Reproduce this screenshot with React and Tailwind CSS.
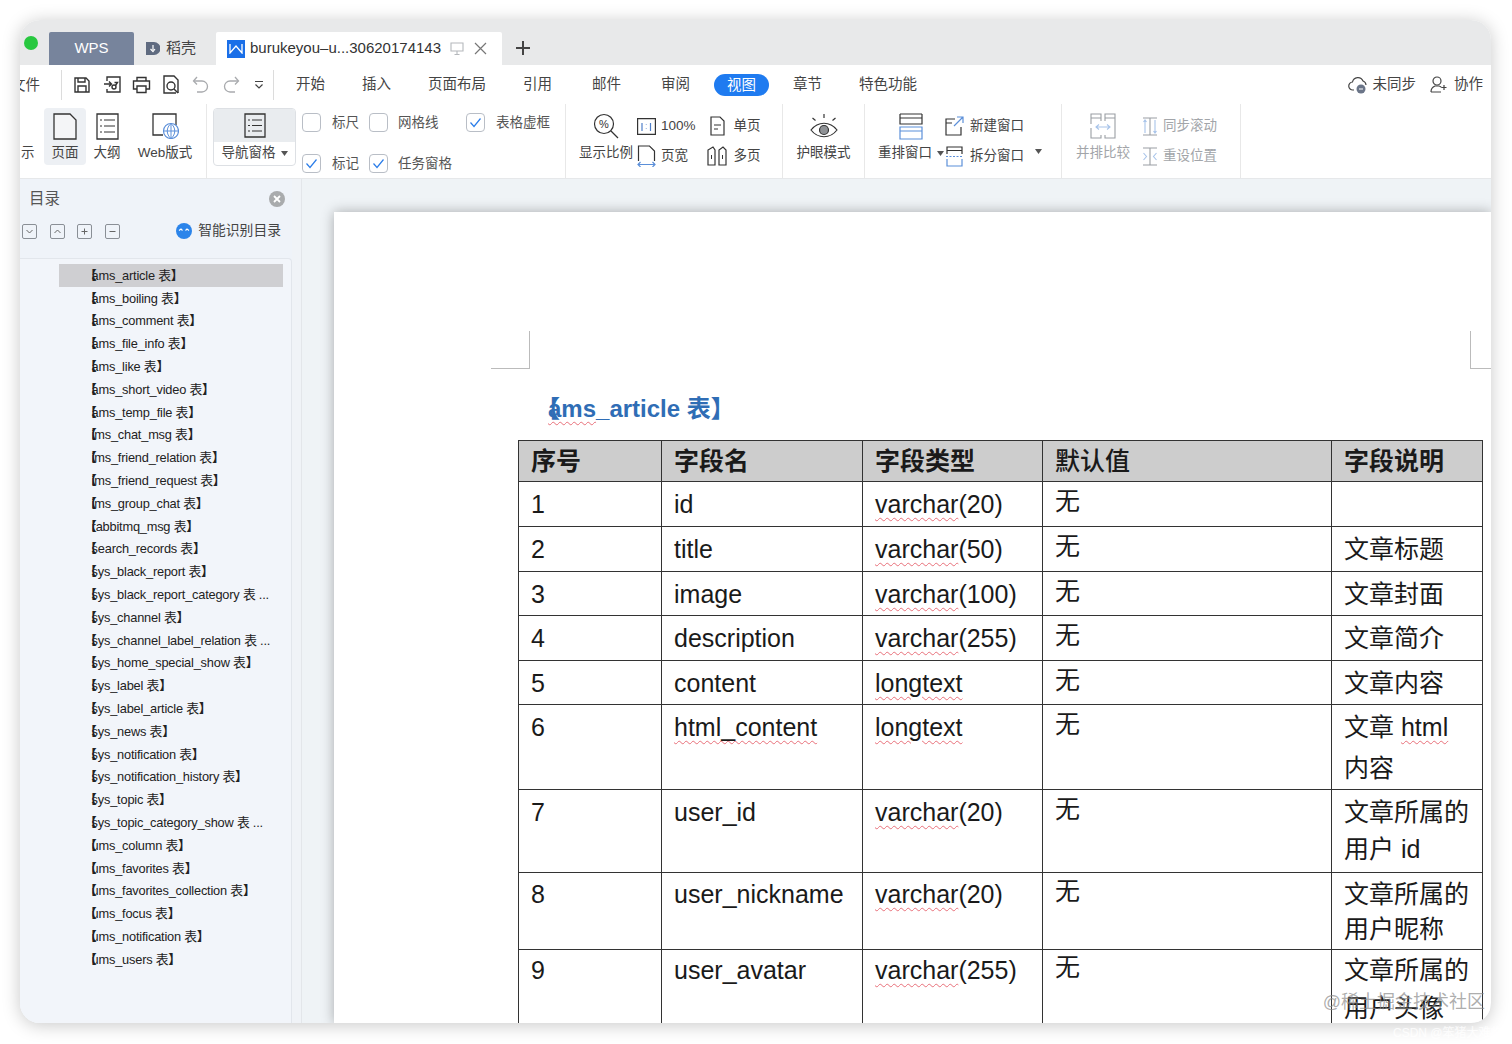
const FONT = "font-['Liberation_Sans','Noto_Sans_CJK_SC',sans-serif]";

const menus = [
  { label: "开始" },
  { label: "插入" },
  { label: "页面布局" },
  { label: "引用" },
  { label: "邮件", extra: "ml-[3px]" },
  { label: "审阅", extra: "ml-[3px]" },
  { label: "视图", active: true },
  { label: "章节" },
  { label: "特色功能" },
];

const outline = [
  "ams_article", "ams_boiling", "ams_comment", "ams_file_info", "ams_like", "ams_short_video",
  "ams_temp_file", "ims_chat_msg", "ims_friend_relation", "ims_friend_request", "ims_group_chat",
  "rabbitmq_msg", "search_records", "sys_black_report", "sys_black_report_category 表 ...",
  "sys_channel", "sys_channel_label_relation 表 ...", "sys_home_special_show", "sys_label",
  "sys_label_article", "sys_news", "sys_notification", "sys_notification_history", "sys_topic",
  "sys_topic_category_show 表 ...", "ums_column", "ums_favorites", "ums_favorites_collection",
  "ums_focus", "ums_notification", "ums_users",
];

const rows = [
  { h: "h-[45px]", lead: "leading-[41px] pt-[2px]", no: "1", name: "id", type: "(20)", note: [""] },
  { h: "h-[45px]", lead: "leading-[41px] pt-[2px]", no: "2", name: "title", type: "(50)", note: ["文章标题"] },
  { h: "h-[44px]", lead: "leading-[41px] pt-[2px]", no: "3", name: "image", type: "(100)", note: ["文章封面"] },
  { h: "h-[45px]", lead: "leading-[41px] pt-[2px]", no: "4", name: "description", type: "(255)", note: ["文章简介"] },
  { h: "h-[44px]", lead: "leading-[41px] pt-[2px]", no: "5", name: "content", long: true, note: ["文章内容"] },
  { h: "h-[84px]", lead: "leading-[41px] pt-[2px]", no: "6", name: "html_content", wavyName: true, long: true, note: ["文章 html", "内容"], wavyNote: true },
  { h: "h-[83px]", lead: "leading-[37px] pt-[4px]", no: "7", name: "user_id", type: "(20)", note: ["文章所属的", "用户 id"] },
  { h: "h-[77px]", lead: "leading-[35px] pt-[4px]", no: "8", name: "user_nickname", type: "(20)", note: ["文章所属的", "用户昵称"] },
  { h: "h-[84px]", lead: "leading-[38px] pt-[1px]", no: "9", name: "user_avatar", type: "(255)", note: ["文章所属的", "用户头像"] },
];

function Wavy({ children }) {
  return (
    <span className="underline decoration-wavy decoration-[#e8707a] decoration-1 underline-offset-[4px]">
      {children}
    </span>
  );
}

function Check({ on }) {
  return (
    <span className="flex h-[19px] w-[19px] items-center justify-center rounded-[4px] border border-[#b9bec6] bg-white">
      {on && (
        <svg width="13" height="13" viewBox="0 0 13 13" fill="none" stroke="#2b7de9" strokeWidth="1.2">
          <path d="M1.5 6.5 5 10.5 11.5 2.5" />
        </svg>
      )}
    </span>
  );
}

function Caret({ color = "#555" }) {
  return (
    <svg width="7" height="5" viewBox="0 0 7 5">
      <path d="M0 0h7L3.5 5z" fill={color} />
    </svg>
  );
}

function SmallBox({ children }) {
  return (
    <span className="flex h-[15px] w-[15px] items-center justify-center rounded-[2px] border border-[#8a8f96]">
      <svg width="9" height="9" viewBox="0 0 9 9" fill="none" stroke="#666" strokeWidth="1">
        {children}
      </svg>
    </span>
  );
}

function LargeTool({ icon, label, caret, width, extra = "", gray }) {
  return (
    <div className={`flex h-[57px] flex-col items-center ${width} ${extra}`}>
      <div className="flex h-[36px] items-center">{icon}</div>
      <div className={`flex items-center gap-[5px] whitespace-nowrap text-[13.5px] leading-[18px] ${gray ? "text-[#a2a5a9]" : "text-[#444]"}`}>
        {label}
        {caret && <Caret />}
      </div>
    </div>
  );
}

function SmallTool({ icon, label, gray, iconWidth = "w-[23px]" }) {
  return (
    <div className={`flex h-[30px] items-center gap-[5px] whitespace-nowrap text-[13.5px] ${gray ? "text-[#a2a5a9]" : "text-[#444]"}`}>
      <span className={`flex justify-center ${iconWidth}`}>{icon}</span>
      {label}
    </div>
  );
}

function QuickIcons() {
  const s = { fill: "none", stroke: "#333", strokeWidth: 1.4 };
  return (
    <div className="flex items-center">
      <svg className="ml-[11px]" width="18" height="18" viewBox="0 0 18 18" {...s}>
        <path d="M2 2h11l3 3v11H2z" /><path d="M5 2v4h7V2M5 16v-6h8v6" />
      </svg>
      <svg className="ml-[12px]" width="19" height="19" viewBox="0 0 19 19" {...s}>
        <path d="M4 6V2h13v15H4v-3" /><path d="M1 9h7M6 6.5 8.5 9 6 11.5" /><circle cx="11" cy="12" r="2" stroke="#333" /><path d="M12.5 10.5l2-3h-3" />
      </svg>
      <svg className="ml-[10px]" width="19" height="18" viewBox="0 0 19 18" {...s}>
        <path d="M5 5V1.5h9V5M5 13H1.5V5h16v8H14" /><path d="M5 10h9v6.5H5z" />
      </svg>
      <svg className="ml-[11px]" width="18" height="19" viewBox="0 0 18 19" {...s}>
        <path d="M14 18H2V1h10l4 4v13" /><circle cx="9" cy="11" r="4" /><path d="m12 14 4 4" />
      </svg>
      <svg className="ml-[12px]" width="17" height="17" viewBox="0 0 17 17" fill="none" stroke="#a9abae" strokeWidth="1.3">
        <path d="M5 1 1.5 5 5 8.5" /><path d="M2 5h8a5.5 5.5 0 0 1 0 11H5" />
      </svg>
      <svg className="ml-[14px]" width="17" height="17" viewBox="0 0 17 17" fill="none" stroke="#a9abae" strokeWidth="1.3">
        <path d="M12 1l3.500 4L12 8.500" /><path d="M15 5H7a5.500 5.500 0 0 0 0 11h5" />
      </svg>
      <svg className="ml-[14px]" width="10" height="10" viewBox="0 0 10 10" fill="none" stroke="#444" strokeWidth="1.2">
        <path d="M1 1.500h8M1.500 4.500 5 8l3.500-3.500" />
      </svg>
    </div>
  );
}

function Toolbar() {
  const line = { fill: "none", stroke: "#333", strokeWidth: 1.3 };
  const blue = "#5b8fd9";
  return (
    <div className="flex h-[75px] border-b border-[#e6e8ea] bg-white">
      <div className="flex w-[187px] shrink-0 border-r border-[#e8e8e8] pt-[4px]">
        <div className="w-[24px] whitespace-nowrap pl-px pt-[36px] text-[13.5px] leading-[18px] text-[#444]">示</div>
        <LargeTool
          width="w-[42px]"
          extra="rounded-[4px] bg-[#edf0f4]"
          label="页面"
          icon={
            <svg width="24" height="27" viewBox="0 0 24 27" {...line}>
              <path d="M1 1h16l6 6v19H1z" fill="#f4f5f7" />
            </svg>
          }
        />
        <LargeTool
          width="w-[42px]"
          label="大纲"
          icon={
            <svg width="23" height="27" viewBox="0 0 23 27" {...line}>
              <path d="M1 1h21v25H1z" />
              <path d="M4 7h2M8 7h11M4 13h2M8 13h11M4 19h2M8 19h11" strokeWidth="1" />
            </svg>
          }
        />
        <LargeTool
          width="w-[56px]"
          extra="ml-[9px]"
          label="Web版式"
          icon={
            <svg width="27" height="26" viewBox="0 0 27 26" fill="none">
              <path d="M11 22H1V1h23v11" stroke="#333" strokeWidth="1.3" />
              <circle cx="19" cy="18" r="7.500" fill="#fff" stroke={blue} strokeWidth="1.2" />
              <path d="M11.500 18h15M19 10.500v15M19 10.500c-5 4-5 11 0 15M19 10.500c5 4 5 11 0 15" stroke={blue} />
            </svg>
          }
        />
      </div>

      <div className="flex w-[359px] shrink-0 border-r border-[#e8e8e8] pl-[6px] pt-[4px]">
        <div className="flex h-[58px] w-[83px] flex-col overflow-hidden rounded-[4px] border border-[#dde0e4]">
          <div className="flex h-[33px] items-center justify-center bg-[#e9ecef]">
            <svg width="22" height="25" viewBox="0 0 22 25" {...line}>
              <path d="M1 1h20v23H1z" />
              <path d="M4 7h2M8 7h10M4 12.500h2M8 12.500h10M4 18h2M8 18h10" strokeWidth="1" />
            </svg>
          </div>
          <div className="flex flex-1 items-center justify-center gap-[5px] text-[13.5px] text-[#444]">
            导航窗格 <Caret />
          </div>
        </div>
        <div className="ml-[6px] grid grid-cols-[67px_97px_auto] grid-rows-[41px_24px] pt-[5px] text-[13.5px] text-[#555]">
          <label className="flex h-[19px] gap-[11px] whitespace-nowrap"><Check />标尺</label>
          <label className="flex h-[19px] gap-[10px] whitespace-nowrap"><Check />网格线</label>
          <label className="flex h-[19px] gap-[11px] whitespace-nowrap"><Check on />表格虚框</label>
          <label className="flex h-[19px] gap-[11px] whitespace-nowrap"><Check on />标记</label>
          <label className="flex h-[19px] gap-[10px] whitespace-nowrap"><Check on />任务窗格</label>
        </div>
      </div>

      <div className="flex w-[217px] shrink-0 border-r border-[#e8e8e8] pl-[12px] pt-[4px]">
        <LargeTool
          width="w-[56px]"
          label="显示比例"
          icon={
            <svg width="26" height="27" viewBox="0 0 26 27" fill="none" stroke="#333" strokeWidth="1.2">
              <circle cx="11" cy="11" r="9.500" /><path d="m18 18 7 7" />
              <text x="11" y="15" fontSize="11" textAnchor="middle" fill="#333" stroke="none" className="font-['Liberation_Sans']">%</text>
            </svg>
          }
        />
        <div className="ml-[2px] flex flex-col pt-[3px]">
          <SmallTool
            iconWidth="w-[20px]"
            label="100%"
            icon={
              <svg width="19" height="17" viewBox="0 0 19 17" fill="none" stroke="#333" strokeWidth="1.2">
                <path d="M.6.6h17.800v15.800H.6z" />
                <path d="M5 5v8M13.500 5v8" stroke="#4f7fc9" /><path d="M9.300 6.500v.5M9.300 10v.5" stroke="#4f7fc9" />
              </svg>
            }
          />
          <SmallTool
            iconWidth="w-[20px]"
            label="页宽"
            icon={
              <svg width="19" height="22" viewBox="0 0 19 22" fill="none">
                <path d="M1.500 16V1h11l5 5v10" stroke="#333" strokeWidth="1.200" />
                <path d="M1 19.500h17M3.500 17 1 19.500 3.500 22M15.500 17l2.500 2.500-2.500 2.500" stroke={blue} strokeWidth="1.200" />
              </svg>
            }
          />
        </div>
        <div className="ml-[10px] flex flex-col pt-[3px]">
          <SmallTool
            iconWidth="w-[23px]"
            label="单页"
            icon={
              <svg width="15" height="20" viewBox="0 0 15 20" fill="none" stroke="#333" strokeWidth="1.200">
                <path d="M1 1h9l4 4v14H1z" /><path d="M4 9h7M4 13h4" strokeWidth="1" />
              </svg>
            }
          />
          <SmallTool
            iconWidth="w-[23px]"
            label="多页"
            icon={
              <svg width="20" height="20" viewBox="0 0 20 20" fill="none" stroke="#333" strokeWidth="1.200">
                <path d="M1 19V4l5-3 2 3v15zM12 19V4l4-3 3 3v15z" /><path d="M4.500 9v4M15.500 9v4" strokeWidth="1" />
              </svg>
            }
          />
        </div>
      </div>

      <div className="flex w-[82px] shrink-0 justify-center border-r border-[#e8e8e8] pt-[4px]">
        <LargeTool
          width="w-[56px]"
          label="护眼模式"
          icon={
            <svg width="28" height="27" viewBox="0 0 28 27" fill="none" stroke="#333" strokeWidth="1.200">
              <path d="M1 17c7-9 19-9 26 0-7 9-19 9-26 0z" /><circle cx="14" cy="17" r="4.500" fill="#8f9296" />
              <path d="M14 1v4M2.500 5l3 2.500M25.500 5l-3 2.500" />
            </svg>
          }
        />
      </div>

      <div className="flex w-[197px] shrink-0 border-r border-[#e8e8e8] pl-[13px] pt-[4px]">
        <LargeTool
          width="w-[66px]"
          label="重排窗口"
          caret
          icon={
            <svg width="24" height="27" viewBox="0 0 24 27" fill="none" strokeWidth="1.200">
              <path d="M1 1h22M1 1v10h22V1M1 5h22" stroke="#333" />
              <path d="M1 14h22v12H1zM1 18h22" stroke={blue} />
            </svg>
          }
        />
        <div className="ml-[-1px] flex flex-col pt-[3px]">
          <SmallTool
            iconWidth="w-[22px]"
            label="新建窗口"
            icon={
              <svg width="19" height="20" viewBox="0 0 19 20" fill="none" strokeWidth="1.200">
                <path d="M10 3H1v16h15v-8" stroke="#333" /><path d="M1 7h6" stroke="#333" /><path d="m9 10 9-9M12 1h6v6" stroke={blue} />
              </svg>
            }
          />
          <SmallTool
            iconWidth="w-[22px]"
            label="拆分窗口"
            icon={
              <svg width="17" height="21" viewBox="0 0 17 21" fill="none" strokeWidth="1.200">
                <path d="M1 8V1h15v7M1 4.500h15" stroke="#333" /><path d="M0 10.500h17" stroke={blue} strokeDasharray="2 1.500" />
                <path d="M1 13v7h15v-7" stroke={blue} />
              </svg>
            }
          />
        </div>
        <div className="ml-[11px] pt-[41px]"><Caret /></div>
      </div>

      <div className="flex w-[179px] shrink-0 border-r border-[#e8e8e8] pl-[13px] pt-[4px]">
        <LargeTool
          gray
          width="w-[56px]"
          label="并排比较"
          icon={
            <svg width="26" height="26" viewBox="0 0 26 26" fill="none" strokeWidth="1.100">
              <path d="M1 11V1h10v7M1 15v10h10v-3M15 8V1h10v24H15v-3M1 5h10M15 5h10" stroke="#9a9ea3" />
              <path d="M6 14h14M9 11.500 6 14l3 2.500M17 11.500l3 2.500-3 2.500" stroke="#a8c4ea" />
            </svg>
          }
        />
        <div className="ml-[10px] flex flex-col pt-[3px]">
          <SmallTool
            gray
            iconWidth="w-[17px]"
            label="同步滚动"
            icon={
              <svg width="16" height="19" viewBox="0 0 16 19" fill="none" strokeWidth="1.100">
                <path d="M1 1h14M1 18h14M8 1v17" stroke="#9a9ea3" />
                <path d="M3 3v13M13 3v13M1.500 5 3 3l1.500 2M11.500 14l1.500 2 1.500-2" stroke="#a8c4ea" />
              </svg>
            }
          />
          <SmallTool
            gray
            iconWidth="w-[17px]"
            label="重设位置"
            icon={
              <svg width="16" height="19" viewBox="0 0 16 19" fill="none" strokeWidth="1.100">
                <path d="M1 1h14M1 18h14M8 1v17" stroke="#9a9ea3" />
                <path d="m1.500 6 3 3.500-3 3.500M14.500 6l-3 3.500 3 3.500" stroke="#a8c4ea" />
              </svg>
            }
          />
        </div>
      </div>
    </div>
  );
}

function Sidebar() {
  return (
    <aside className="flex w-[272px] shrink-0 flex-col bg-[#eff3f9]">
      <div className="flex h-[39px] items-center justify-between pl-[9px] pr-[7px]">
        <span className="text-[15.5px] text-[#555]">目录</span>
        <svg width="16" height="16" viewBox="0 0 16 16">
          <circle cx="8" cy="8" r="8" fill="#a9abad" />
          <path d="m5 5 6 6M11 5l-6 6" stroke="#fff" strokeWidth="1.800" />
        </svg>
      </div>
      <div className="flex h-[26px] items-center pl-[2px] pr-[11px]">
        <div className="flex gap-[12.500px]">
          <SmallBox><path d="m1.500 3 3 3 3-3" /></SmallBox>
          <SmallBox><path d="m1.500 6 3-3 3 3" /></SmallBox>
          <SmallBox><path d="M1.500 4.500h6M4.500 1.500v6" /></SmallBox>
          <SmallBox><path d="M1.500 4.500h6" /></SmallBox>
        </div>
        <svg className="ml-auto" width="16" height="16" viewBox="0 0 16 16">
          <circle cx="8" cy="8" r="8" fill="#2b84ea" />
          <path d="M3 7.500 5 6l1.500 1.500M9.500 7.500 11 6l2 1.500" stroke="#fff" fill="none" strokeWidth="1.100" />
        </svg>
        <span className="ml-[6px] whitespace-nowrap text-[13.8px] text-[#444]">智能识别目录</span>
      </div>
      <div className="mt-[14px] flex-1 rounded-tr-[4px] border-r border-t border-[#e2e6ec] bg-[#f2f5fa] pt-[5px]">
        {outline.map((item, i) => (
          <div
            key={item}
            className={`ml-[39px] mr-[8px] flex h-[22.800px] items-center whitespace-nowrap pl-[25px] text-[12.800px] tracking-[-0.2px] text-[#222] ${i === 0 ? "bg-[#cfcfd2]" : ""}`}
          >
            <span className="font-bold">【</span>
            <span className="-ml-[5px]">{item.endsWith("...") ? item : `${item} 表`}</span>
            {!item.endsWith("...") && <span className="font-bold">】</span>}
          </div>
        ))}
      </div>
    </aside>
  );
}

function DocTable() {
  const cell = "border-[1.500px] border-[#333] px-[12px] align-top";
  return (
    <table className="w-[964px] table-fixed border-collapse text-[25px] text-[#1a1a1a]">
      <colgroup>
        <col className="w-[143px]" />
        <col className="w-[201px]" />
        <col className="w-[180px]" />
        <col className="w-[289px]" />
        <col className="w-[151px]" />
      </colgroup>
      <thead>
        <tr className="h-[40px] bg-[#cdcdcd] text-left font-bold leading-[40px]">
          <th className={cell}>序号</th>
          <th className={cell}>字段名</th>
          <th className={cell}>字段类型</th>
          <th className={`${cell} font-medium`}>默认值</th>
          <th className={cell}>字段说明</th>
        </tr>
      </thead>
      <tbody>
        {rows.map((row) => (
          <tr key={row.no} className={row.h}>
            <td className={`${cell} ${row.lead}`}>{row.no}</td>
            <td className={`${cell} ${row.lead}`}>
              {row.wavyName ? <Wavy>{row.name}</Wavy> : row.name}
            </td>
            <td className={`${cell} ${row.lead}`}>
              {row.long ? <Wavy>longtext</Wavy> : <><Wavy>varchar</Wavy>{row.type}</>}
            </td>
            <td className={`${cell} ${row.lead}`}><span className="-mt-[3px] block">无</span></td>
            <td className={`${cell} ${row.lead} whitespace-nowrap`}>
              {row.note.map((text) => (
                <div key={text}>
                  {row.wavyNote && text.includes("html") ? <>文章 <Wavy>html</Wavy></> : text || "\u00a0"}
                </div>
              ))}
            </td>
          </tr>
        ))}
      </tbody>
    </table>
  );
}

function Page() {
  return (
    <div className="relative ml-[32px] mt-[33px] flex-1 bg-white pl-[184px] pt-[180px] shadow-[0_0_12px_rgba(0,0,0,0.3)]">
      <div className="absolute left-[157px] top-[119px] h-[38px] w-[39px] border-b border-r border-[#bbb]" />
      <div className="absolute right-0 top-[119px] h-[38px] w-[21px] border-b border-l border-[#bbb]" />
      <h1 className="mb-[14px] h-[34px] pl-[21px] text-[24px] font-bold leading-[34px] text-[#2f6db5]">
        <span className="-ml-[3px]">【</span>
        <span className="-ml-[12px]"><Wavy>ams</Wavy>_article 表</span>
        <span>】</span>
      </h1>
      <DocTable />
    </div>
  );
}

export default function App() {
  return (
    <div className={`h-[1044px] w-[1512px] overflow-hidden bg-white pl-[20px] pt-[20px] ${FONT}`}>
      <div className="relative flex h-[1003px] w-[1471px] flex-col overflow-hidden rounded-[20px] shadow-[0_2px_18px_rgba(0,0,0,0.22)]">
        <header className="flex h-[45px] shrink-0 items-end bg-[#e8e9ea]">
          <span className="mb-[15px] ml-[4px] h-[14px] w-[14px] rounded-full bg-[#28c840]" />
          <div className="ml-[11px] flex h-[33px] w-[85px] items-center justify-center rounded-t-[2px] bg-[#77849c] text-[15px] text-white">
            WPS
          </div>
          <div className="flex h-[33px] w-[82px] items-center gap-[6px] pl-[11px] text-[15px] text-[#444]">
            <svg width="15" height="15" viewBox="0 0 15 15">
              <path d="M1 1h8a5.500 5.500 0 0 1 0 13H1z" fill="#5f6b80" />
              <path d="M8 4v5M5.500 8 8 10.500 10 8" stroke="#fff" fill="none" strokeWidth="1.200" />
            </svg>
            稻壳
          </div>
          <div className="flex h-[33px] w-[286px] items-center rounded-t-[2px] bg-white pl-[11px] text-[15px] text-[#333]">
            <span className="flex h-[18px] w-[18px] items-center justify-center bg-[#1a6fe8]">
              <svg width="14" height="11" viewBox="0 0 14 11" fill="none" stroke="#fff" strokeWidth="1.300">
                <path d="M1 1v9l6-7 6 7V1" />
              </svg>
            </span>
            <span className="ml-[5px] whitespace-nowrap">burukeyou–u...30620174143</span>
            <svg className="ml-[9px]" width="14" height="13" viewBox="0 0 14 13" fill="none" stroke="#b5b8bc" strokeWidth="1.100">
              <path d="M1 1h12v8H1zM7 9v3M4.500 12.500h5" />
            </svg>
            <svg className="ml-[10px]" width="13" height="13" viewBox="0 0 13 13" fill="none" stroke="#777" strokeWidth="1.200">
              <path d="m1 1 11 11M12 1 1 12" />
            </svg>
          </div>
          <svg className="mb-[10px] ml-[14px]" width="14" height="14" viewBox="0 0 14 14" stroke="#444" strokeWidth="2">
            <path d="M0 7h14M7 0v14" />
          </svg>
        </header>

        <div className="flex h-[39px] shrink-0 items-center bg-white pr-[8px] text-[14.500px] text-[#444]">
          <div className="w-[42px] shrink-0 overflow-hidden border-r border-[#dcdcdc] leading-[30px]">
            <span className="-ml-[9px] block">文件</span>
          </div>
          <QuickIcons />
          <div className="ml-[9px] h-[30px] w-px bg-[#dcdcdc]" />
          <nav className="ml-[22px] flex items-center gap-[37px]">
            {menus.map((m) => (
              <span
                key={m.label}
                className={`whitespace-nowrap ${m.extra || ""} ${m.active ? "-mx-[13px] rounded-full bg-[#1f7bf0] px-[13px] leading-[22px] text-white" : ""}`}
              >
                {m.label}
              </span>
            ))}
          </nav>
          <div className="ml-auto flex items-center whitespace-nowrap">
            <svg width="20" height="19" viewBox="0 0 20 19" fill="none">
              <path d="M6 15H5a4 4 0 0 1-.5-8 5.500 5.500 0 0 1 10.500-1 4.500 4.500 0 0 1 3 4" stroke="#444" strokeWidth="1.200" />
              <circle cx="13" cy="14" r="4.500" fill="#6b7588" />
              <path d="M11 14h4" stroke="#fff" strokeWidth="1.200" />
            </svg>
            <span className="ml-[5px]">未同步</span>
            <svg className="ml-[14px]" width="17" height="17" viewBox="0 0 17 17" fill="none" stroke="#444" strokeWidth="1.200">
              <circle cx="7" cy="5" r="4" /><path d="M1 16c0-3 1.500-5 4-6h4c1 .3 2 .8 2.500 1.500M1 16h10M14 9v5M11.500 11.500h5" />
            </svg>
            <span className="ml-[7px]">协作</span>
          </div>
        </div>

        <Toolbar />

        <main className="flex min-h-0 flex-1 bg-[#eff3f6]">
          <Sidebar />
          <div className="w-[10px] shrink-0 border-r border-[#e3e6ea] bg-[#f0f3f7]" />
          <Page />
        </main>

        <span className="absolute bottom-[7px] right-[6px] whitespace-nowrap text-[18px] text-[#8a8a8a]/70">@稀土掘金技术社区</span>
      </div>
      <span className="absolute left-[1393px] top-[1024px] whitespace-nowrap text-[12px] text-white/80">CSDN @笨猪大难临头</span>
    </div>
  );
}
